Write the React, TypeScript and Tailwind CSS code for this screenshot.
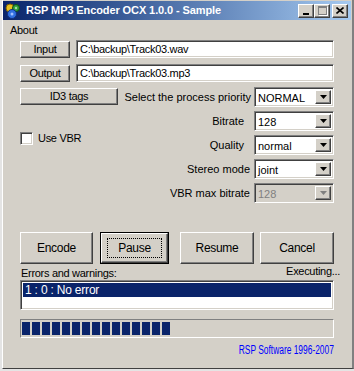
import React from 'react';

const FONT = { fontFamily: '"Liberation Sans", Arial, sans-serif' };

// classic win2k bevels
const raised =
  'border border-t-white border-l-white border-b-[#404040] border-r-[#404040] shadow-[inset_-1px_-1px_#808080]';
const sunken =
  'border border-t-[#808080] border-l-[#808080] border-b-white border-r-white shadow-[inset_1px_1px_#404040,inset_-1px_-1px_#d4d0c8]';

function Btn({ label, className = '' }: { label: string; className?: string }) {
  return (
    <div className={`flex items-center justify-center bg-[#d4d0c8] text-black ${raised} ${className}`}>
      {label}
    </div>
  );
}

function Arrow({ disabled }: { disabled?: boolean }) {
  return (
    <div className={`flex w-[16px] items-center justify-center bg-[#d4d0c8] ${raised}`}>
      <svg width="7" height="4" viewBox="0 0 7 4">
        <path d="M0 0h7L3.5 4z" fill={disabled ? '#808080' : '#000'} />
      </svg>
    </div>
  );
}

function Combo({ value, disabled }: { value: string; disabled?: boolean }) {
  return (
    <div className={`flex h-[20px] w-[80px] p-[2px] ${sunken} ${disabled ? 'bg-[#d4d0c8]' : 'bg-white'}`}>
      <div className={`flex-1 pl-[1px] leading-[16px] ${disabled ? 'text-[#808080]' : 'text-black'}`}>{value}</div>
      <Arrow disabled={disabled} />
    </div>
  );
}

function Row({ label, value, pr, disabled }: { label: string; value: string; pr: string; disabled?: boolean }) {
  return (
    <div className="flex items-center justify-end">
      <span className={pr}>{label}</span>
      <Combo value={value} disabled={disabled} />
    </div>
  );
}

function Gears() {
  return (
    <svg width="16" height="16" viewBox="0 0 16 16">
      <circle cx="5" cy="5" r="4" fill="#e8c020" stroke="#806000" strokeWidth="1" />
      <circle cx="11" cy="5" r="3.5" fill="#30a040" stroke="#105010" strokeWidth="1" />
      <circle cx="7" cy="11" r="4.5" fill="#3070e0" stroke="#103080" strokeWidth="1" />
      <circle cx="7" cy="11" r="1.5" fill="#a0c0ff" />
      <circle cx="11" cy="5" r="1.2" fill="#a0e0a0" />
    </svg>
  );
}

function CapBtn({ children }: { children: React.ReactNode }) {
  return (
    <div className={`flex h-[14px] w-[16px] items-center justify-center bg-[#d4d0c8] ${raised}`}>{children}</div>
  );
}

export default function App() {
  const blocks = Array.from({ length: 15 });
  return (
    <div className="h-[371px] w-[354px] overflow-hidden bg-[#e4e4e4] text-[11px]" style={FONT}>
      <div className="ml-[2px] flex h-[369px] w-[352px] flex-col border-b border-l border-r-2 border-b-[#404040] border-l-white border-r-[#808080] bg-[#d4d0c8]">
        {/* title bar */}
        <div className="mt-[1px] mr-[1px] flex h-[19px] items-center bg-gradient-to-r from-[#0a246a] to-[#a6caf0] pl-[2px] pr-[3px]">
          <Gears />
          <span className="ml-[5px] flex-1 text-[11px] font-bold text-white tracking-[-0.1px]">
            RSP MP3 Encoder OCX 1.0.0 - Sample
          </span>
          <CapBtn>
            <div className="mt-[6px] h-[2px] w-[6px] bg-black" />
          </CapBtn>
          <CapBtn>
            <div className="h-[9px] w-[9px] border border-t-2 border-[#808080] shadow-[1px_1px_white]" />
          </CapBtn>
          <div className="ml-[2px]">
            <CapBtn>
              <svg width="8" height="7" viewBox="0 0 8 7">
                <path d="M0.5 0.5l7 6M7.5 0.5l-7 6" stroke="#000" strokeWidth="1.6" />
              </svg>
            </CapBtn>
          </div>
        </div>

        {/* menu */}
        <div className="flex h-[18px] items-end pl-[7px] tracking-[-0.3px]">
          <span>About</span>
        </div>

        <div className="flex flex-col pl-[17px] pr-[18px]">
          <div className="mt-[2px] flex h-[18px] items-center gap-[6px] tracking-[-0.3px]">
            <Btn label="Input" className="h-[17px] w-[50px]" />
            <div className={`h-[18px] flex-1 bg-white pl-[3px] leading-[16px] ${sunken}`}>C:\backup\Track03.wav</div>
          </div>
          <div className="mt-[6px] flex h-[18px] items-center gap-[6px] tracking-[-0.3px]">
            <Btn label="Output" className="h-[17px] w-[50px]" />
            <div className={`h-[18px] flex-1 bg-white pl-[3px] leading-[16px] ${sunken}`}>C:\backup\Track03.mp3</div>
          </div>

          <div className="mt-[5px] flex">
            <div className="flex w-[98px] flex-col tracking-[-0.3px]">
              <Btn label="ID3 tags" className="mt-[1px] h-[17px] w-[98px]" />
              <label className="mt-[25px] flex items-center gap-[5px]">
                <div className={`h-[13px] w-[13px] bg-white ${sunken}`} />
                <span>Use VBR</span>
              </label>
            </div>
            <div className="flex flex-1 flex-col gap-[4px]">
              <Row label="Select the process priority" value="NORMAL" pr="pr-[3px]" />
              <Row label="Bitrate" value="128" pr="pr-[10px]" />
              <Row label="Quality" value="normal" pr="pr-[10px]" />
              <Row label="Stereo mode" value="joint" pr="pr-[4px]" />
              <Row label="VBR max bitrate" value="128" pr="pr-[4px]" disabled />
            </div>
          </div>

          <div className="mt-[29px] flex h-[32px] items-stretch text-[12px] tracking-[-0.3px]">
            <Btn label="Encode" className="w-[73px]" />
            <div className="ml-[7px] flex w-[69px] border border-black">
              <div className={`flex flex-1 items-center justify-center bg-[#d4d0c8] ${raised}`}>
                <div className="flex h-[20px] w-[55px] items-center justify-center border border-dotted border-black">
                  Pause
                </div>
              </div>
            </div>
            <Btn label="Resume" className="ml-[11px] w-[74px]" />
            <Btn label="Cancel" className="ml-[6px] w-[74px]" />
          </div>

          <div className="mt-[1px] flex h-[14px] items-end justify-between text-[11px] leading-[12px] tracking-[-0.3px]">
            <span className="pl-[1px]">Errors and warnings:</span>
            <span className="-mr-[6px] mb-[2px]">Executing...</span>
          </div>

          <div className={`mt-[1px] h-[30px] bg-white p-[2px] ${sunken}`}>
            <div className="h-[14px] bg-[#0a246a] pl-[2px] text-[12px] leading-[14px] text-white tracking-[-0.2px]">
              1 : 0 : No error
            </div>
          </div>

          <div className="mt-[9px] flex h-[19px] gap-[2px] border border-b-white border-l-[#808080] border-r-white border-t-[#808080] px-[1px] py-[2px]">
            {blocks.map((_, i) => (
              <div key={i} className="h-[13px] w-[8px] bg-[#0a246a]" />
            ))}
          </div>

          <div className="mt-[6px] flex justify-end">
            <span className="origin-right scale-x-[0.7] text-[12px] leading-[13px] whitespace-nowrap text-[#0000ff]">
              RSP Software 1996-2007
            </span>
          </div>
        </div>
      </div>
    </div>
  );
}
